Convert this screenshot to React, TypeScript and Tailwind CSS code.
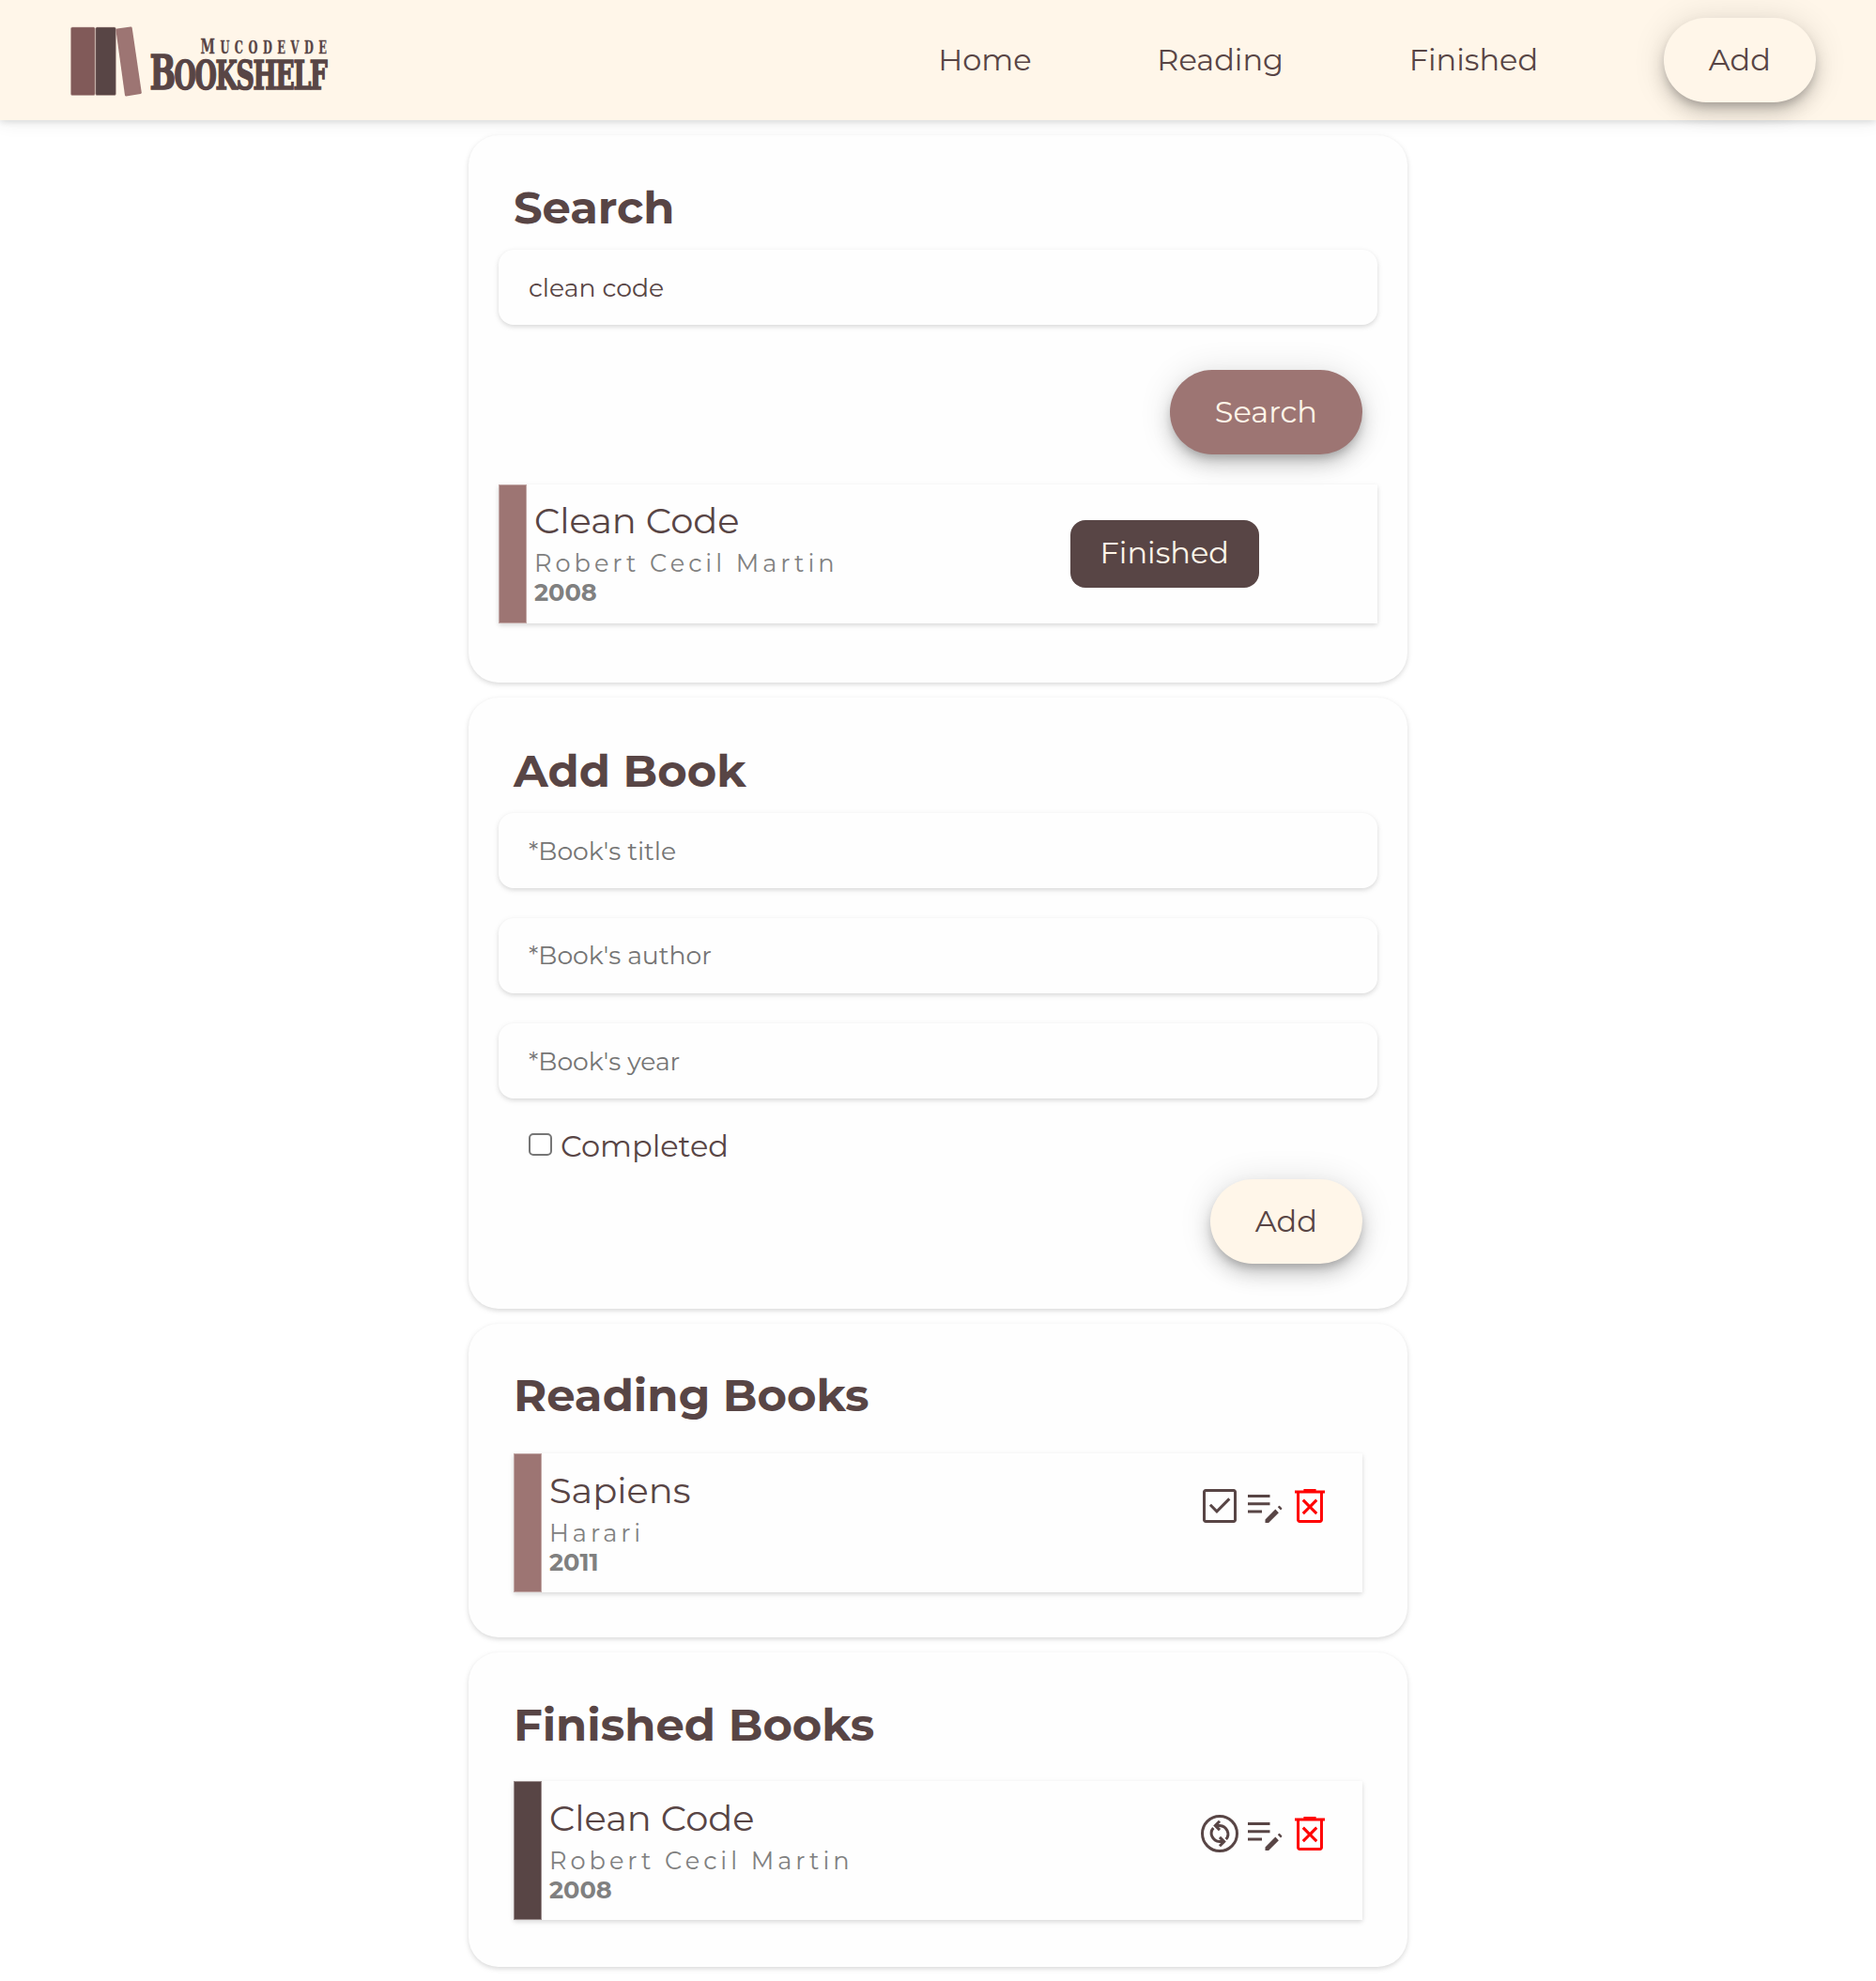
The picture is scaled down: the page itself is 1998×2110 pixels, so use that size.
import type { ReactNode } from "react";

const CARD_SHADOW = "shadow-[0_2px_6px_rgba(0,0,0,0.1),0_2px_4px_rgba(0,0,0,0.06)]";
const PILL =
  "flex h-[90px] items-center rounded-full px-12 pb-[1px] text-[32px] leading-[39px] shadow-[0_6px_10px_-2px_rgba(0,0,0,0.2),0_12px_20px_rgba(0,0,0,0.14),0_2px_36px_rgba(0,0,0,0.12)]";

function Logo() {
  return (
    <svg className="h-[100px] w-[290px] overflow-visible" viewBox="0 0 290 100" aria-label="Mucodevde Bookshelf">
      <rect x="0.5" y="15" width="25.6" height="72.5" rx="1.5" fill="#815a59" stroke="#b99f98" strokeWidth="0.5" />
      <rect x="26.8" y="15" width="21.6" height="72.5" rx="1.5" fill="#584545" stroke="#b99f98" strokeWidth="0.5" />
      <path d="M49.6 16.6 64.2 14.6Q65.4 14.5 65.7 15.8L75.8 84.4Q75.9 85.6 74.7 85.9L59.4 88.5Q58.3 88.6 58 87.4L48.4 18.1Q48.4 16.8 49.6 16.6Z" fill="#9d7573" />
      <g fill="#584545" stroke="#584545" fontFamily="'DejaVu Serif', serif" fontWeight="700">
        <text transform="translate(138.5 43.3) scale(0.62 1)" fontSize="18.5" strokeWidth="0.3" textLength="217" lengthAdjust="spacing">
          <tspan fontSize="22.5">M</tspan>UCODEVDE
        </text>
        <text transform="translate(84.5 81) scale(0.64 1)" fontSize="42" strokeWidth="1.6" textLength="296" lengthAdjust="spacing">
          <tspan fontSize="51">B</tspan>OOKSHELF
        </text>
      </g>
    </svg>
  );
}

function Icon({ children, className = "" }: { children: ReactNode; className?: string }) {
  return (
    <svg className={`size-12 ${className}`} viewBox="0 0 48 48" fill="currentColor">
      {children}
    </svg>
  );
}

function CheckBoxIcon() {
  return (
    <Icon>
      <path d="M20.95 31.95 35.4 17.5l-2.15-2.15-12.3 12.3L15 21.7l-2.15 2.15ZM9 42q-1.2 0-2.1-.9Q6 40.2 6 39V9q0-1.2.9-2.1Q7.8 6 9 6h30q1.2 0 2.1.9.9.9.9 2.1v30q0 1.2-.9 2.1-.9.9-2.1.9Zm0-3h30V9H9v30Z" />
    </Icon>
  );
}

function ChangeCircleIcon() {
  return (
    <Icon>
      <g fill="none" stroke="currentColor" strokeWidth="3">
        <circle cx="24" cy="24" r="18.5" />
        <path d="M17.3 17.9A9.4 9 0 0 0 24 32.6H28M30.7 30.1A9.4 9 0 0 0 24 15.4H20" />
        <path d="m24 27.9 4.7 4.7-4.7 4.7M24 20.1l-4.7-4.7 4.7-4.7" />
      </g>
    </Icon>
  );
}

function EditNoteIcon() {
  return (
    <Icon>
      <path d="M6 31.5v-3h15v3ZM6 23.25v-3h23.5v3ZM6 15v-3h23.5v3ZM24.5 42v-3.6l10.8-10.8 3.6 3.6L28.1 42ZM37.8 25.2l1.2-1.2q.5-.4 1 0l2.2 2.2q.4.5 0 1l-1.2 1.2Z" />
    </Icon>
  );
}

function DeleteForeverIcon() {
  return (
    <Icon className="text-[#ff0000]">
      <path d="m17.9 33.3 6.1-6.2 6.2 6.2 2.1-2.2-6.1-6.2 6.1-6.2-2.1-2.2-6.2 6.2-6.1-6.2-2.2 2.2 6.2 6.2-6.2 6.2ZM13.05 42q-1.2 0-2.1-.9-.9-.9-.9-2.1V10.5H8v-3h9.4V6h13.2v1.5H40v3h-2.05V39q0 1.2-.9 2.1-.9.9-2.1.9Zm0-3h21.9V10.5h-21.9Z" />
    </Icon>
  );
}

function Card({ title, className = "", children }: { title: string; className?: string; children: ReactNode }) {
  return (
    <section className={`rounded-[32px] bg-[#fefefe] px-8 ${CARD_SHADOW} ${className}`}>
      <h2 className="px-4 text-[48px] leading-[58.5px] font-bold">{title}</h2>
      {children}
    </section>
  );
}

function Field({ className = "", ...props }: { value?: string; placeholder?: string; className?: string }) {
  return (
    <input
      readOnly
      {...props}
      className={`block h-[79.5px] w-full rounded-2xl bg-[#fefefe] px-8 text-[26.667px] placeholder:text-[#757575] ${CARD_SHADOW} ${className}`}
    />
  );
}

function BookRow({
  title,
  author,
  year,
  finished = false,
  className = "",
  children,
}: {
  title: string;
  author: string;
  year: string;
  finished?: boolean;
  className?: string;
  children: ReactNode;
}) {
  return (
    <article className={`flex h-[148px] bg-[#fefefe] ${CARD_SHADOW} ${className}`}>
      <div
        className={`w-[30px] border ${finished ? "border-[#9a8c8c] bg-[#584545]" : "border-[#c2a8a6] bg-[#9d7573]"}`}
      />
      <div className="flex-1 pt-[16.6px] pl-2">
        <h3 className="mb-[5.4px] text-[38.4px] leading-[46.8px]">{title}</h3>
        <p className="text-[25.6px] leading-[31.2px] tracking-[4px] text-[#808080]">{author}</p>
        <p className="text-[25.6px] leading-[31.6px] font-bold text-[#808080]">{year}</p>
      </div>
      {children}
    </article>
  );
}

export default function App() {
  return (
    <div className="min-h-[2110px] bg-white font-['Montserrat','Open_Sans',sans-serif] text-[#584545]">
      <header className="relative flex h-32 items-center justify-between bg-[#fff6e9] pr-16 pl-[75px] shadow-[0_2px_6px_rgba(60,64,67,0.14),0_4px_16px_rgba(60,64,67,0.08)]">
        <Logo />
        <nav className="flex items-center gap-[133.7px] text-[32px] leading-[39px]">
          <a className="pb-[2px]">Home</a>
          <a className="pb-[2px]">Reading</a>
          <a className="pb-[2px]">Finished</a>
          <button className={`${PILL} bg-[#fff6e9]`}>Add</button>
        </nav>
      </header>

      <main className="mx-auto flex w-[1000px] flex-col gap-4 pt-4">
        <Card title="Search" className="h-[583px] pt-12">
          <div className="mt-[15.5px]">
            <Field value="clean code" className="pt-[2px]" />
          </div>
          <div className="mt-12 mb-8 flex justify-end pr-4">
            <button className={`${PILL} bg-[#9d7573] text-[#fff6e9]`}>Search</button>
          </div>
          <BookRow title="Clean Code" author="Robert Cecil Martin" year="2008">
            <div className="flex items-center pr-[126px]">
              <button className="h-[72px] rounded-2xl bg-[#584545] px-8 pb-[2px] text-[32px] leading-[39px] text-[#fff6e9]">
                Finished
              </button>
            </div>
          </BookRow>
        </Card>

        <Card title="Add Book" className="h-[650.5px] pt-[48.5px]">
          <div className="mt-4 flex flex-col gap-[32.5px]">
            <Field placeholder="*Book's title" className="pt-[2px]" />
            <Field placeholder="*Book's author" />
            <Field placeholder="*Book's year" className="pt-[2px]" />
          </div>
          <label className="mt-[31px] flex h-[39px] items-center gap-[9.5px] pl-8 text-[32px] leading-[39px]">
            <span className="mb-[2px] size-[24.5px] rounded-[5px] border-2 border-[#767676] bg-white" />
            Completed
          </label>
          <div className="mt-4 flex justify-end pr-4">
            <button className={`${PILL} bg-[#fff6e9]`}>Add</button>
          </div>
        </Card>

        <Card title="Reading Books" className="h-[334.5px] pt-[47px]">
          <BookRow title="Sapiens" author="Harari" year="2011" className="mx-4 mt-[33px]">
            <div className="flex pt-8 pr-8">
              <CheckBoxIcon />
              <EditNoteIcon />
              <DeleteForeverIcon />
            </div>
          </BookRow>
        </Card>

        <Card title="Finished Books" className="h-[334.5px] pt-12">
          <BookRow title="Clean Code" author="Robert Cecil Martin" year="2008" finished className="mx-4 mt-[30.5px]">
            <div className="flex pt-8 pr-8">
              <ChangeCircleIcon />
              <EditNoteIcon />
              <DeleteForeverIcon />
            </div>
          </BookRow>
        </Card>
      </main>
    </div>
  );
}
